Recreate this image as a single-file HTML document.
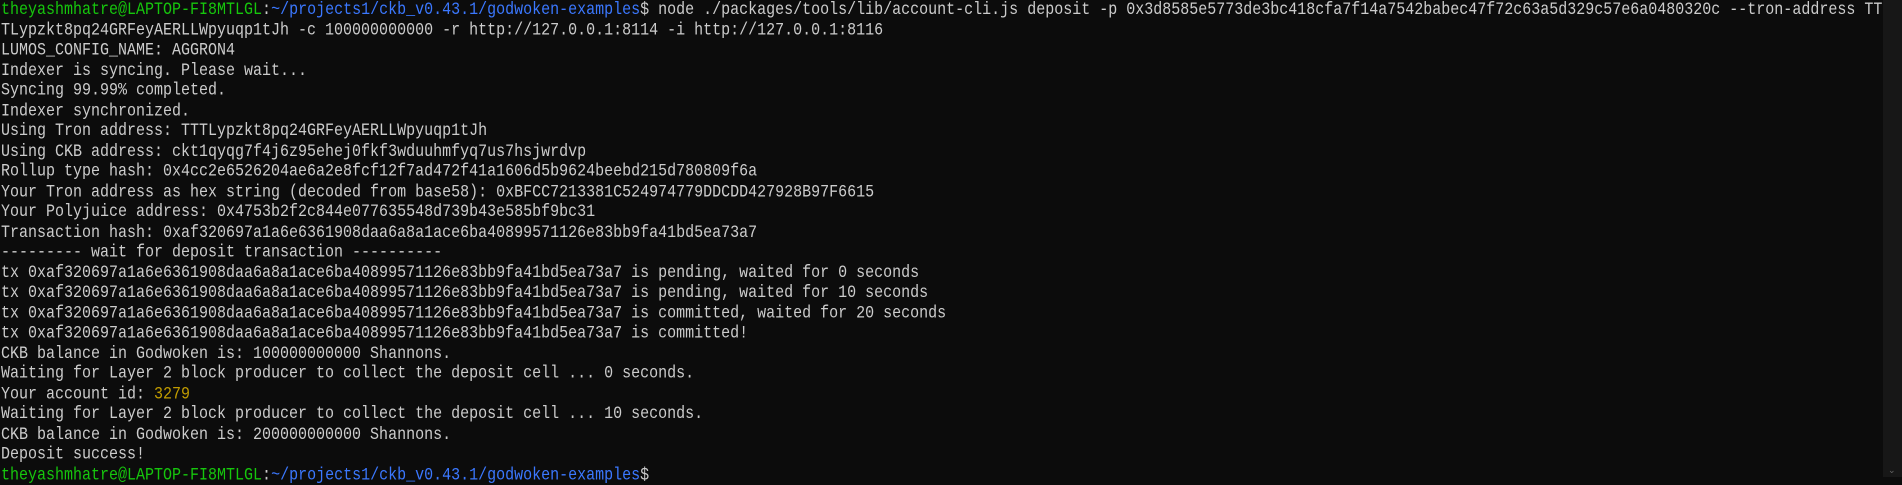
<!DOCTYPE html>
<html><head><meta charset="utf-8"><style>
html,body{margin:0;padding:0;background:#0c0c0c;width:1902px;height:477px;overflow:hidden}
pre{margin:0;position:absolute;left:1px;top:0;font-family:"Liberation Mono",monospace;font-size:15px;line-height:17.5px;color:#cccccc;white-space:pre;letter-spacing:0;transform:scaleY(1.155);transform-origin:0 0}
.g{color:#16c60c}.b{color:#3b78ff}.y{color:#c19c00}
.sb{position:absolute;left:1883px;top:0;width:19px;height:477px;background:#171717}
.ar{position:absolute;left:1888px;top:466px;color:#666;font:9px "DejaVu Sans",sans-serif}
</style></head><body>
<pre><span class="g">theyashmhatre@LAPTOP-FI8MTLGL</span>:<span class="b">~/projects1/ckb_v0.43.1/godwoken-examples</span>$ node ./packages/tools/lib/account-cli.js deposit -p 0x3d8585e5773de3bc418cfa7f14a7542babec47f72c63a5d329c57e6a0480320c --tron-address TT
TLypzkt8pq24GRFeyAERLLWpyuqp1tJh -c 100000000000 -r http://127.0.0.1:8114 -i http://127.0.0.1:8116
LUMOS_CONFIG_NAME: AGGRON4
Indexer is syncing. Please wait...
Syncing 99.99% completed.
Indexer synchronized.
Using Tron address: TTTLypzkt8pq24GRFeyAERLLWpyuqp1tJh
Using CKB address: ckt1qyqg7f4j6z95ehej0fkf3wduuhmfyq7us7hsjwrdvp
Rollup type hash: 0x4cc2e6526204ae6a2e8fcf12f7ad472f41a1606d5b9624beebd215d780809f6a
Your Tron address as hex string (decoded from base58): 0xBFCC7213381C524974779DDCDD427928B97F6615
Your Polyjuice address: 0x4753b2f2c844e077635548d739b43e585bf9bc31
Transaction hash: 0xaf320697a1a6e6361908daa6a8a1ace6ba40899571126e83bb9fa41bd5ea73a7
--------- wait for deposit transaction ----------
tx 0xaf320697a1a6e6361908daa6a8a1ace6ba40899571126e83bb9fa41bd5ea73a7 is pending, waited for 0 seconds
tx 0xaf320697a1a6e6361908daa6a8a1ace6ba40899571126e83bb9fa41bd5ea73a7 is pending, waited for 10 seconds
tx 0xaf320697a1a6e6361908daa6a8a1ace6ba40899571126e83bb9fa41bd5ea73a7 is committed, waited for 20 seconds
tx 0xaf320697a1a6e6361908daa6a8a1ace6ba40899571126e83bb9fa41bd5ea73a7 is committed!
CKB balance in Godwoken is: 100000000000 Shannons.
Waiting for Layer 2 block producer to collect the deposit cell ... 0 seconds.
Your account id: <span class="y">3279</span>
Waiting for Layer 2 block producer to collect the deposit cell ... 10 seconds.
CKB balance in Godwoken is: 200000000000 Shannons.
Deposit success!
<span class="g">theyashmhatre@LAPTOP-FI8MTLGL</span>:<span class="b">~/projects1/ckb_v0.43.1/godwoken-examples</span>$</pre>
<div class="sb"></div><div class="ar">&#8964;</div>
</body></html>
